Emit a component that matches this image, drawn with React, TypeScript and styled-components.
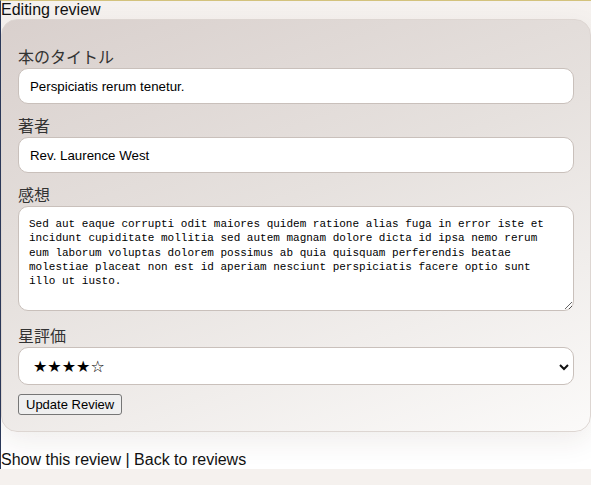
import styled, { createGlobalStyle } from 'styled-components';

const GlobalStyle = createGlobalStyle`
  html, body {
    margin: 0;
    padding: 0;
    background: #f5f1ee;
  }
  body {
    font-family: 'Liberation Sans', 'Noto Sans CJK JP', sans-serif;
    color: #111;
  }
`;

const Page = styled.div`
  border-top: 1px solid #d3c27c;
  border-left: 1px solid #2b3a5c;
  background: linear-gradient(to bottom, #f5f1ee 0, #faf8f7 300px, #ffffff 440px);
`;

const Title = styled.div`
  font-size: 16px;
  line-height: 18px;
`;

const Card = styled.form`
  border: 1px solid #ddd6d2;
  border-radius: 16px;
  padding: 25px 16px 16px;
  background: linear-gradient(160deg, #d9d0cd 0%, #e6e1de 45%, #fbfaf9 100%);
  box-shadow: 0 10px 28px rgba(60, 40, 30, 0.08);
`;

const Field = styled.div<{ gap?: number }>`
  padding-bottom: ${({ gap }) => gap ?? 10}px;
`;

const Label = styled.label`
  display: block;
  height: 22px;
  font-family: 'Noto Sans CJK JP', sans-serif;
  font-size: 16px;
  line-height: 22px;
  margin-bottom: 1px;
  color: #333;
`;

const TextInput = styled.input`
  display: block;
  box-sizing: border-box;
  width: 100%;
  height: 36px;
  padding: 0 11px;
  border: 1px solid #c9c0bb;
  border-radius: 10px;
  background: #fff;
  font-family: 'Liberation Sans', sans-serif;
  font-size: 13.3px;
  color: #000;
  outline: none;
`;

const TextArea = styled.textarea`
  display: block;
  box-sizing: border-box;
  width: 100%;
  height: 105px;
  margin: 0;
  padding: 10px 12px 10px 10px;
  border: 1px solid #c9c0bb;
  border-radius: 10px;
  background: #fff;
  font-family: 'Liberation Mono', monospace;
  font-size: 11px;
  line-height: 14.3px;
  color: #000;
  outline: none;
`;

const SelectWrap = styled.div`
  position: relative;
`;

const Select = styled.select`
  display: block;
  box-sizing: border-box;
  width: 100%;
  height: 38px;
  margin: 0;
  padding: 0 30px 0 14px;
  appearance: none;
  border: 1px solid #c9c0bb;
  border-radius: 10px;
  background: #fff;
  font-family: 'DejaVu Sans', sans-serif;
  font-size: 16px;
  color: #000;
  outline: none;
`;

const Chevron = styled.svg`
  position: absolute;
  right: 5px;
  top: 16px;
  pointer-events: none;
`;

const Button = styled.button`
  display: block;
  box-sizing: border-box;
  margin: 9px 0 0;
  height: 21px;
  padding: 0 7px;
  border: 1px solid #767676;
  border-radius: 3px;
  background: #efefef;
  font-family: 'Liberation Sans', sans-serif;
  font-size: 13px;
  color: #000;
`;

const Footer = styled.div`
  margin-top: 19px;
  font-size: 16px;
  line-height: 18px;
`;

const review =
  'Sed aut eaque corrupti odit maiores quidem ratione alias fuga in error iste et incidunt cupiditate mollitia sed autem magnam dolore dicta id ipsa nemo rerum eum laborum voluptas dolorem possimus ab quia quisquam perferendis beatae molestiae placeat non est id aperiam nesciunt perspiciatis facere optio sunt illo ut iusto.';

const App = () => {
  return (
    <Page>
      <GlobalStyle />
      <Title>Editing review</Title>
      <Card onSubmit={(e) => e.preventDefault()}>
        <Field>
          <Label>本のタイトル</Label>
          <TextInput defaultValue="Perspiciatis rerum tenetur." />
        </Field>
        <Field>
          <Label>著者</Label>
          <TextInput defaultValue="Rev. Laurence West" />
        </Field>
        <Field gap={13}>
          <Label>感想</Label>
          <TextArea defaultValue={review} />
        </Field>
        <Field gap={0}>
          <Label>星評価</Label>
          <SelectWrap>
            <Select defaultValue="4">
              <option value="1">★☆☆☆☆</option>
              <option value="2">★★☆☆☆</option>
              <option value="3">★★★☆☆</option>
              <option value="4">★★★★☆</option>
              <option value="5">★★★★★</option>
            </Select>
            <Chevron width="10" height="8" viewBox="0 0 10 8">
              <path d="M1 2 L5 6 L9 2" fill="none" stroke="#111" strokeWidth="2" />
            </Chevron>
          </SelectWrap>
        </Field>
        <Button type="submit">Update Review</Button>
      </Card>
      <Footer>Show this review | Back to reviews</Footer>
    </Page>
  );
};

export default App;
